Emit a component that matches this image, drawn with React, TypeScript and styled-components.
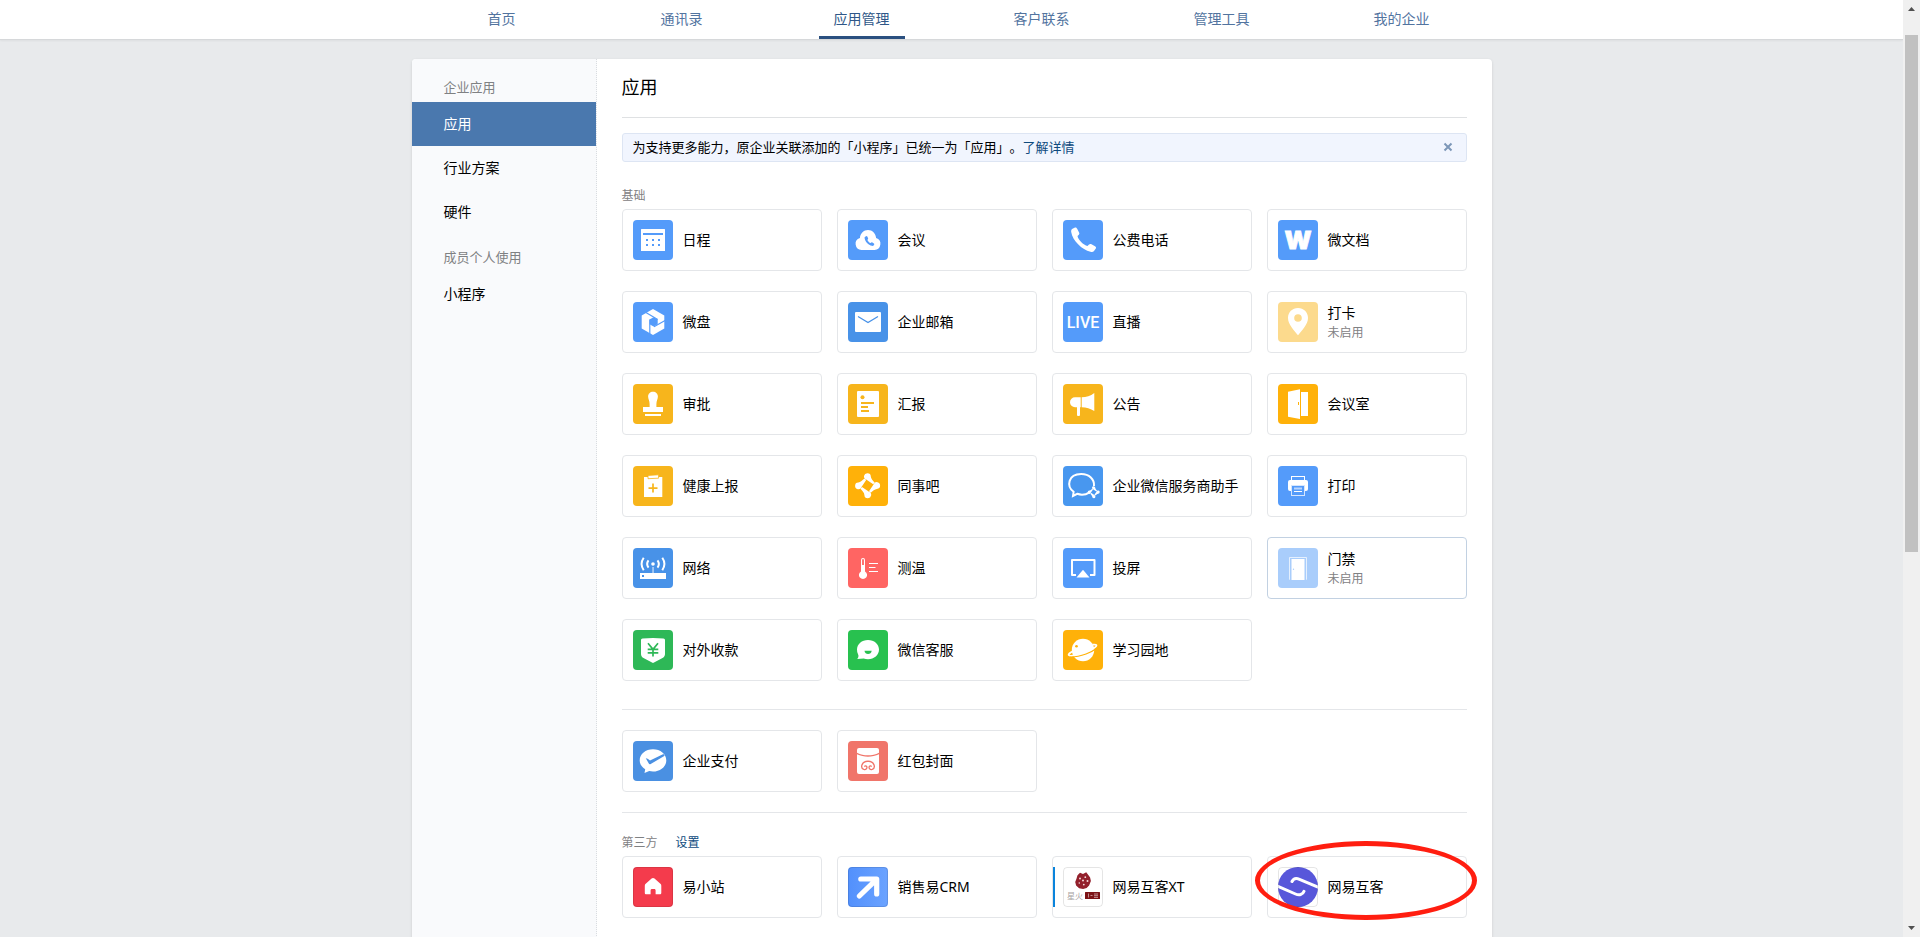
import React from "react";
import styled, { createGlobalStyle, css } from "styled-components";

const GlobalStyle = createGlobalStyle`
  * {
    box-sizing: border-box;
  }
  body {
    margin: 0;
    background: #e8eaec;
    color: #000;
    font-family: "Noto Sans", "Noto Sans CJK SC", sans-serif;
    font-size: 14px;
    line-height: 20px;
    text-spacing-trim: space-all;
  }
  a {
    color: inherit;
    text-decoration: none;
  }
  ul {
    margin: 0;
    padding: 0;
    list-style: none;
  }
`;

/* ---------- frame ---------- */

const Shell = styled.div`
  display: flex;
  height: 100vh;
`;

const Scroller = styled.div`
  flex: 1;
  min-width: 0;
  overflow-y: auto;
  scrollbar-width: none;
`;

const Track = styled.div`
  display: flex;
  flex-direction: column;
  align-items: center;
  width: 17px;
  background: #f0f0f0;
`;

const TrackArrow = styled.svg`
  flex: none;
  width: 17px;
  height: 17px;
  fill: #505050;
`;

const TrackSpace = styled.div<{ $share: number }>`
  flex: ${(p) => p.$share} 0 0;
`;

const Thumb = styled.div`
  flex: 517 0 0;
  width: 13px;
  background: #c1c1c1;
`;

/* ---------- top navigation ---------- */

const Header = styled.header`
  background: #fff;
  border-bottom: 1px solid #d6d8da;
  box-shadow: 0 1px 2px rgba(0, 0, 0, 0.05);
`;

const Nav = styled.nav`
  display: grid;
  grid-template-columns: repeat(6, 1fr);
  justify-items: center;
  max-width: 1080px;
  margin: 0 auto;
`;

const NavLink = styled.a<{ $active?: boolean }>`
  height: 39px;
  padding: 9px 15px 0;
  color: ${(p) => (p.$active ? "#2f5788" : "#52749f")};
  border-bottom: 3px solid ${(p) => (p.$active ? "#2b5080" : "transparent")};
`;

/* ---------- panel ---------- */

const Panel = styled.div`
  display: flex;
  max-width: 1080px;
  margin: 19px auto 40px;
  background: #fff;
  border-radius: 4px;
  box-shadow: 0 1px 3px rgba(0, 0, 0, 0.12);
  overflow: hidden;
`;

const Sidebar = styled.aside`
  flex: none;
  width: 185px;
  padding-top: 5px;
  background: #f9fafc;
  border-right: 1px dotted #d9dce0;
`;

const SideLabel = styled.h2`
  margin: 0;
  padding: 9px 0 1px 32px;
  font-size: 13px;
  font-weight: 400;
  line-height: 28px;
  color: #7f8183;
`;

const SideLink = styled.a<{ $active?: boolean }>`
  display: block;
  padding-left: 32px;
  line-height: 44px;
  ${(p) =>
    p.$active &&
    css`
      color: #fff;
      background: #4a78ae;
    `}
`;

const Content = styled.main`
  flex: 1;
  min-width: 0;
  padding: 0 25px 80px;
`;

const Title = styled.h1`
  margin: 0;
  padding-top: 14px;
  height: 59px;
  font-size: 18px;
  font-weight: 400;
  line-height: 28px;
  border-bottom: 1px solid #dfe1e3;
`;

const Notice = styled.div`
  display: flex;
  align-items: center;
  justify-content: space-between;
  height: 29px;
  margin: 15px 0 24px;
  padding: 0 9px 2px 10px;
  font-size: 13px;
  background: #f1f5fe;
  border: 1px solid #dde5f3;
  border-radius: 3px;
`;

const TextLink = styled.a`
  color: #0e4a7d;
`;

const Close = styled.button`
  display: grid;
  place-items: center;
  width: 18px;
  height: 18px;
  padding: 0;
  background: none;
  border: 0;
  cursor: pointer;
`;

const SectionHead = styled.div`
  display: flex;
  gap: 18px;
  padding-bottom: 3px;
  font-size: 12px;
  line-height: 20px;
  color: #7f8183;
`;

const SectionName = styled.h2`
  margin: 0;
  font: inherit;
`;

const Rule = styled.hr<{ $gap: number }>`
  height: 1px;
  margin: ${(p) => p.$gap}px 0 20px;
  border: 0;
  background: #e4e6e9;
`;

const Grid = styled.ul`
  display: grid;
  grid-template-columns: repeat(4, minmax(0, 1fr));
  gap: 20px 15px;
`;

/* ---------- app card ---------- */

const Card = styled.a<{ $hover?: boolean; $bar?: boolean }>`
  position: relative;
  display: flex;
  align-items: center;
  gap: 10px;
  height: 62px;
  padding: 0 10px;
  background: #fff;
  border: 1px solid ${(p) => (p.$hover ? "#c2d1e2" : "#e4e6e9")};
  border-radius: 4px;
  ${(p) =>
    p.$bar &&
    css`
      &::before {
        content: "";
        position: absolute;
        left: 0;
        width: 2px;
        height: 40px;
        background: #0a84dc;
      }
    `}
`;

const Icon = styled.svg<{ $bg: string; $edge?: boolean }>`
  flex: none;
  width: 40px;
  height: 40px;
  border-radius: 4px;
  background: ${(p) => p.$bg};
  fill: #fff;
  ${(p) =>
    p.$edge &&
    css`
      outline: 1px solid rgba(0, 0, 0, 0.1);
      outline-offset: -1px;
    `}
`;

const CardText = styled.span<{ $off?: boolean }>`
  display: flex;
  flex-direction: column;
  padding-top: ${(p) => (p.$off ? 2 : 0)}px;
  white-space: nowrap;
`;

const Status = styled.small`
  font-size: 12px;
  line-height: 20px;
  color: #7f8183;
`;

const Ring = styled.span`
  position: absolute;
  inset: -16px -11px -3px -13px;
  border: 5px solid #ff1e10;
  border-radius: 50%;
  pointer-events: none;
`;

/* ---------- drawings, all on a 40 x 40 field ---------- */

const BLUE = "#549bfa";
const SKY = "#4892e8";
const GOLD = "#f7b51c";
const AMBER = "#ffb109";

const petals = [0, 90, 180, 270].map((a) => (
  <path
    key={a}
    transform={`rotate(${a} 19.6 19.7)`}
    d="M19.5 7.200a3.300 3.300 0 0 1 3.300 3.200c.1 2.200 2.200 4.200 3.900 6.200l-1.500 1.700-7-4.700a3.300 3.300 0 0 1 1.300-6.400z"
  />
));

const art = {
  calendar: (
    <>
      <rect x="8" y="9" width="24" height="22" rx="0.6" />
      <g fill={BLUE}>
        <rect x="10" y="13" width="20" height="2" />
        {[13, 19, 25].map((x) => (
          <g key={x}>
            <rect x={x} y="19" width="2" height="2" />
            <rect x={x} y="24" width="2" height="2" />
          </g>
        ))}
      </g>
    </>
  ),
  meeting: (
    <>
      <path d="M13.500 30a6.200 6.200 0 0 1-1.600-12.100C12.300 13.400 15.700 10 20 10s7.700 3.400 8.100 7.900A6.200 6.200 0 0 1 26.500 30z" />
      <path
        fill={BLUE}
        d="M17.100 16.800l1.200-.6c.5-.2.8 0 1 .4l.8 1.700c.2.5 0 .8-.4 1.100l-.3.300c.5 1.600 1.800 2.900 3.300 3.400l.6-.5c.4-.3.700-.3 1.100-.1l1.500.9c.5.3.5.600.3 1l-.7 1c-.4.5-.9.600-1.500.4-3.800-1-6.800-4-7.400-7.600-.1-.6 0-1.100.5-1.400z"
      />
    </>
  ),
  phone: (
    <path d="M9.500 8.800L12 7.500c1-.3 1.800.2 2.300 1.500l1.900 3.800c.4 1 0 1.800-.9 2.400l-.8.7c.5 3.600 6 9.100 10 10l1.500-1.300c.8-.7 1.600-.8 2.500-.3l3.500 1.900c1 .6 1.300 1.400.8 2.400L31 31c-.7 1-2 1.200-3.500.8C19 29.800 9.500 20.500 8.200 12c-.2-1.400.2-2.500 1.300-3.200z" />
  ),
  doc: (
    <text
      x="20"
      y="29"
      textAnchor="middle"
      fontFamily="Inter, sans-serif"
      fontWeight="900"
      fontSize="25"
      stroke="#fff"
      strokeWidth="0.800"
    >
      W
    </text>
  ),
  drive: (
    <>
      <path d="M20 7l11.300 6.500v13L20 33 8.700 26.500v-13z" />
      <path fill={BLUE} d="M20.500 15.300l4.200 2.300v4.600l-4.200 2.300-3.900-2.300v-4.800z" />
      <g stroke={BLUE} strokeWidth="1.200" fill="none">
        <path d="M12.500 10.300l12.200 7.300M32.500 18.300l-11.500 6.400M16.800 33V17.400" />
      </g>
    </>
  ),
  mail: (
    <>
      <rect x="7" y="10" width="26" height="20" rx="1" />
      <path d="M10 14.500l10 6 10-6" fill="none" stroke={SKY} strokeWidth="1.300" />
    </>
  ),
  live: (
    <text
      x="20"
      y="25.600"
      textAnchor="middle"
      fontFamily="Roboto, sans-serif"
      fontWeight="500"
      fontSize="16"
    >
      LIVE
    </text>
  ),
  pin: (
    <path
      fillRule="evenodd"
      d="M20 6c5.700 0 10 4.300 10 9.900 0 6.400-6.300 12.600-10 17.400-3.700-4.800-10-11-10-17.400C10 10.300 14.300 6 20 6zm0 6.200a3.800 3.800 0 1 0 0 7.600 3.800 3.800 0 0 0 0-7.600z"
    />
  ),
  stamp: (
    <>
      <path d="M20 7.700c2.900 0 4.900 2.100 4.900 4.800 0 2.200-1.500 4.500-1.500 7.500V23h6.600v5H10v-5h6.600v-3c0-3-1.500-5.300-1.500-7.500 0-2.700 2-4.800 4.900-4.800z" />
      <rect x="12" y="30" width="16" height="2" />
    </>
  ),
  report: (
    <>
      <rect x="9" y="7" width="22" height="26" rx="1" />
      <g fill={GOLD}>
        <circle cx="14.500" cy="13.300" r="2" />
        <rect x="13" y="18" width="13" height="2" />
        <rect x="13" y="22" width="7" height="2" />
        <rect x="13" y="26" width="8" height="2" />
      </g>
    </>
  ),
  horn: (
    <>
      <path d="M17.700 13.300H12a5 5 0 0 0 0 10h2V31a1 1 0 0 0 1 1h1a1 1 0 0 0 1-1v-7.700h.7z" />
      <path d="M18.700 13.300c4.600 0 8.800-1.500 12.600-4.400v18.200c-3.800-2.500-8-3.800-12.600-3.800z" />
    </>
  ),
  room: (
    <>
      <path d="M10 7.700l12-2.500V35l-12-2.300z" />
      <rect x="23" y="8" width="7" height="24" />
      <rect x="20" y="18" width="1" height="3" fill={AMBER} />
    </>
  ),
  health: (
    <>
      <rect x="11" y="11" width="18.300" height="20" />
      <path
        d="M15 9.400l10.600-.6v3.400L15 12.700z"
        stroke={GOLD}
        strokeWidth="0.800"
      />
      <path d="M20 17.600v9M15.500 22.100h9" stroke={GOLD} strokeWidth="1.700" />
    </>
  ),
  bar: <>{petals}</>,
  helper: (
    <>
      <path
        d="M26.500 26.300a14 14 0 0 1-12.300 1.500L10 30l.6-4.200C3.300 20.300 4.900 8 18.200 8c8 0 13.400 5.200 12.800 12"
        fill="none"
        stroke="#fff"
        strokeWidth="2"
      />
      <g transform="translate(21.300 16.700) scale(0.480)">{petals}</g>
    </>
  ),
  printer: (
    <>
      <rect
        x="13.500"
        y="10.500"
        width="13"
        height="5"
        fill="none"
        stroke="#fff"
      />
      <rect x="10" y="14" width="20" height="11" rx="2" />
      <rect
        x="13.500"
        y="19.500"
        width="13"
        height="10"
        fill={BLUE}
        stroke="#d5e6fe"
      />
      <path d="M16 22.500h8" stroke="#b9d6fd" strokeWidth="2" />
      <path d="M16 25.500h8" stroke="#fff" />
    </>
  ),
  router: (
    <>
      <path fillRule="evenodd" d="M7 25h26v6H7zM9 27v2h2v-2z" />
      <rect x="19.300" y="19" width="1.500" height="6" opacity="0.600" />
      <circle cx="20" cy="16" r="1.800" />
      <g fill="none" stroke="#fff" strokeWidth="2">
        <path d="M15.500 12.400a6 6 0 0 0 0 7.200M24.500 12.400a6 6 0 0 1 0 7.200" />
        <path d="M10.700 9.800a11 11 0 0 0 0 12.400M29.300 9.800a11 11 0 0 1 0 12.400" />
      </g>
    </>
  ),
  thermometer: (
    <>
      <path
        fillRule="evenodd"
        d="M15 10a2 2 0 0 1 2 2v11.400a4.100 4.100 0 1 1-4 0V12a2 2 0 0 1 2-2zm-.9 2v5h1.800v-5a.9.9 0 0 0-1.800 0z"
      />
      <path d="M21 15.500h9M21 19.500h6.500M21 23.500h9" stroke="#fff" />
    </>
  ),
  cast: (
    <>
      <path
        d="M13 27H9V12h22.500v15H27"
        fill="none"
        stroke="#fff"
        strokeWidth="2"
        strokeLinejoin="round"
      />
      <path d="M20 21.700l6.500 7.700h-13z" />
    </>
  ),
  gate: (
    <>
      <path
        d="M11.500 31.700V9.500h17v22.200"
        fill="none"
        stroke="#fff"
        opacity="0.700"
      />
      <rect x="13.500" y="11" width="13" height="21" />
      <circle cx="15.500" cy="21.300" r="0.700" fill="#a9cdfb" />
    </>
  ),
  shield: (
    <>
      <path d="M8 10.200c0-1 .6-1.600 1.600-1.700 7-.8 13.800-.8 20.800 0 1 .1 1.600.7 1.600 1.700V24c0 1.500-.6 2.800-2 3.700L21 32.600c-.7.4-1.300.4-2 0l-9-4.900c-1.400-.9-2-2.200-2-3.700z" />
      <path
        d="M15 13.300l5 6 5-6M20 19.300v7.200M14.700 19.400h10.600M14.700 22.800h10.600"
        fill="none"
        stroke="#2eb857"
        strokeWidth="1.700"
      />
    </>
  ),
  service: (
    <>
      <path d="M20 10c6.200 0 11 4.200 11 9.600s-4.800 9.700-11 9.700c-1.500 0-3-.2-4.300-.7L9.300 29c.9-1.300 1.300-2.500 1.100-3.800A9.200 9.200 0 0 1 9 19.600C9 14.200 13.800 10 20 10z" />
      <path fill="#28c14f" d="M16.500 20.700h7.200c-.3 2.200-1.700 3.300-3.600 3.300s-3.300-1.100-3.600-3.300z" />
    </>
  ),
  planet: (
    <>
      <circle cx="20" cy="20" r="11.200" />
      <circle cx="13.500" cy="16.300" r="1.300" fill={AMBER} />
      <path
        d="M9.500 21.500c-2.800 1.400-4.300 2.700-3.800 3.500 1 1.600 8.700.5 16.500-2.600 7-2.700 11.800-5.800 11.200-7.200-.3-.7-1.800-.8-4-.5"
        fill="none"
        stroke="#fff"
        strokeWidth="1.800"
      />
      <path
        d="M7 27c5 .2 10.500-1 16-3 4.300-1.600 7.800-3.400 10-5.200"
        fill="none"
        stroke={AMBER}
        strokeWidth="1.100"
      />
    </>
  ),
  pay: (
    <>
      <path d="M20 8.300c7.400 0 13.300 4.800 13.300 11.100S27.400 30.600 20 30.600c-1.300 0-2.600-.2-3.800-.5L11.500 32l.7-3.700c-3.400-2-5.500-5.300-5.500-8.900C6.700 13.100 12.600 8.300 20 8.300z" />
      <path
        fill="#4a90e2"
        d="M12.800 17.200c1.600.3 3 1.100 4.200 2.400L30.500 13l1.200 1.700-14 8.300c-.8.5-1.500.4-1.900-.4z"
      />
    </>
  ),
  packet: (
    <>
      <path d="M9 9a2 2 0 0 1 2-2h18a2 2 0 0 1 2 2v2.700c-6.800 3.500-15.200 3.500-22 0z" />
      <path d="M9 13.300c6.800 3.300 15.200 3.300 22 0V31a2 2 0 0 1-2 2H11a2 2 0 0 1-2-2z" />
      <path
        d="M15.800 28.400C12.400 27.200 12.800 20.600 20 20.200c7.200.4 7.600 7 4.200 8.200M15.800 28.400c2 .6 3.400-.8 3.100-2.400-.3-1.300-1.900-1.500-2.500-.4M24.200 28.400c-2 .6-3.400-.8-3.100-2.400.3-1.300 1.900-1.500 2.500-.4"
        fill="none"
        stroke="#f0756a"
        strokeWidth="1.300"
      />
    </>
  ),
  house: (
    <path d="M20 11c.6 0 1 .2 1.500.6l5.900 5.200c.6.5.9 1.100.9 1.900v7c0 1.100-.5 1.600-1.600 1.600H22.600V23.500c0-1-.5-1.500-1.500-1.500h-2c-1 0-1.500.5-1.500 1.500v3.800h-4.200c-1.100 0-1.600-.5-1.600-1.600v-7c0-.8.300-1.400.900-1.900l5.900-5.200c.5-.4.900-.6 1.400-.6z" />
  ),
  crm: (
    <path
      d="M11.300 29L27 13.800M12.800 12H28.700V27"
      fill="none"
      stroke="#fff"
      strokeWidth="5.200"
      strokeLinecap="round"
      strokeLinejoin="round"
    />
  ),
  spark: (
    <>
      <path
        fill="#93202c"
        d="M14.500 8.200l2.500-2.500 3 1.200 3.200-1.600 2.300 2.900 1.600 2.300.8 3.600-1.800 4.300-2.500 2.700-3.500 1-4-.9-3-2.600-.9-3.700 1.200-3z"
      />
      <g fill="#f3d9da">
        <circle cx="17" cy="11.500" r="1" />
        <circle cx="22.300" cy="10.200" r="0.900" />
        <circle cx="20" cy="13.600" r="1" />
        <circle cx="16.300" cy="16" r="0.800" />
        <circle cx="24.500" cy="14" r="1" />
        <circle cx="20.800" cy="17.600" r="0.900" />
      </g>
      <text x="4" y="31.500" fontSize="8" fill="#a9a4a4">
        星火
      </text>
      <rect x="22" y="25" width="15" height="7" rx="0.500" fill="#7c1216" />
      <path
        d="M25.500 26.500v4M27.500 28.500h2M31 27h4M31 28.700h4M31 30.400h4"
        stroke="#e3c3c4"
        strokeWidth="0.700"
      />
    </>
  ),
  huke: (
    <>
      <circle cx="20" cy="20" r="20" fill="#5857da" />
      <path
        d="M14 14.500c1.500-3 4.200-3.600 7.500-2.200L40 20.200M0 19.300L17.500 27c3.600 1.500 7.300.8 8.500-2.700"
        fill="none"
        stroke="#fff"
        strokeWidth="3"
        strokeLinecap="round"
      />
    </>
  ),
};

type App = {
  name: string;
  icon: keyof typeof art;
  bg: string;
  off?: boolean;
  hover?: boolean;
  bar?: boolean;
  edge?: boolean;
  ringed?: boolean;
};

const basic: App[] = [
  { name: "日程", icon: "calendar", bg: BLUE },
  { name: "会议", icon: "meeting", bg: BLUE },
  { name: "公费电话", icon: "phone", bg: BLUE },
  { name: "微文档", icon: "doc", bg: BLUE },
  { name: "微盘", icon: "drive", bg: BLUE },
  { name: "企业邮箱", icon: "mail", bg: SKY },
  { name: "直播", icon: "live", bg: BLUE },
  { name: "打卡", icon: "pin", bg: "#fcda8d", off: true },
  { name: "审批", icon: "stamp", bg: GOLD },
  { name: "汇报", icon: "report", bg: GOLD },
  { name: "公告", icon: "horn", bg: GOLD },
  { name: "会议室", icon: "room", bg: AMBER },
  { name: "健康上报", icon: "health", bg: GOLD },
  { name: "同事吧", icon: "bar", bg: AMBER },
  { name: "企业微信服务商助手", icon: "helper", bg: "#4897ef" },
  { name: "打印", icon: "printer", bg: BLUE },
  { name: "网络", icon: "router", bg: SKY },
  { name: "测温", icon: "thermometer", bg: "#ff6563" },
  { name: "投屏", icon: "cast", bg: BLUE },
  { name: "门禁", icon: "gate", bg: "#a9cdfb", off: true, hover: true },
  { name: "对外收款", icon: "shield", bg: "#2eb857" },
  { name: "微信客服", icon: "service", bg: "#28c14f" },
  { name: "学习园地", icon: "planet", bg: AMBER },
];

const payment: App[] = [
  { name: "企业支付", icon: "pay", bg: "#4a90e2" },
  { name: "红包封面", icon: "packet", bg: "#f0756a" },
];

const thirdParty: App[] = [
  { name: "易小站", icon: "house", bg: "#f43b4c", edge: true },
  {
    name: "销售易CRM",
    icon: "crm",
    bg: "linear-gradient(90deg, #5290fc, #6ba3ff)",
    edge: true,
  },
  { name: "网易互客XT", icon: "spark", bg: "#fff", edge: true, bar: true },
  { name: "网易互客", icon: "huke", bg: "#fff", edge: true, ringed: true },
];

const nav = ["首页", "通讯录", "应用管理", "客户联系", "管理工具", "我的企业"];

function AppGrid({ apps }: { apps: App[] }) {
  return (
    <Grid>
      {apps.map((app) => (
        <li key={app.name}>
          <Card href="#" $hover={app.hover} $bar={app.bar}>
            <Icon
              viewBox="0 0 40 40"
              aria-hidden="true"
              $bg={app.bg}
              $edge={app.edge}
            >
              {art[app.icon]}
            </Icon>
            <CardText $off={app.off}>
              {app.name}
              {app.off && <Status>未启用</Status>}
            </CardText>
            {app.ringed && <Ring />}
          </Card>
        </li>
      ))}
    </Grid>
  );
}

export default function App() {
  return (
    <>
      <GlobalStyle />
      <Shell lang="zh-CN">
        <Scroller>
          <Header>
            <Nav>
              {nav.map((name) => (
                <NavLink key={name} href="#" $active={name === "应用管理"}>
                  {name}
                </NavLink>
              ))}
            </Nav>
          </Header>
          <Panel>
            <Sidebar>
              <SideLabel>企业应用</SideLabel>
              <SideLink href="#" $active>
                应用
              </SideLink>
              <SideLink href="#">行业方案</SideLink>
              <SideLink href="#">硬件</SideLink>
              <SideLabel>成员个人使用</SideLabel>
              <SideLink href="#">小程序</SideLink>
            </Sidebar>
            <Content>
              <Title>应用</Title>
              <Notice>
                <span>
                  为支持更多能力，原企业关联添加的「小程序」已统一为「应用」。
                  <TextLink href="#">了解详情</TextLink>
                </span>
                <Close type="button" aria-label="关闭">
                  <svg width="10" height="10" viewBox="0 0 10 10">
                    <path
                      d="M1.500 1.500l7 7M8.500 1.500l-7 7"
                      stroke="#7d97b8"
                      strokeWidth="2"
                    />
                  </svg>
                </Close>
              </Notice>
              <SectionHead>
                <SectionName>基础</SectionName>
              </SectionHead>
              <AppGrid apps={basic} />
              <Rule $gap={28} />
              <AppGrid apps={payment} />
              <Rule $gap={20} />
              <SectionHead>
                <SectionName>第三方</SectionName>
                <TextLink href="#">设置</TextLink>
              </SectionHead>
              <AppGrid apps={thirdParty} />
            </Content>
          </Panel>
        </Scroller>
        <Track aria-hidden="true">
          <TrackArrow viewBox="0 0 17 17">
            <path d="M5 11h7L8.500 7z" />
          </TrackArrow>
          <TrackSpace $share={18} />
          <Thumb />
          <TrackSpace $share={368} />
          <TrackArrow viewBox="0 0 17 17">
            <path d="M5 6h7l-3.500 4z" />
          </TrackArrow>
        </Track>
      </Shell>
    </>
  );
}
